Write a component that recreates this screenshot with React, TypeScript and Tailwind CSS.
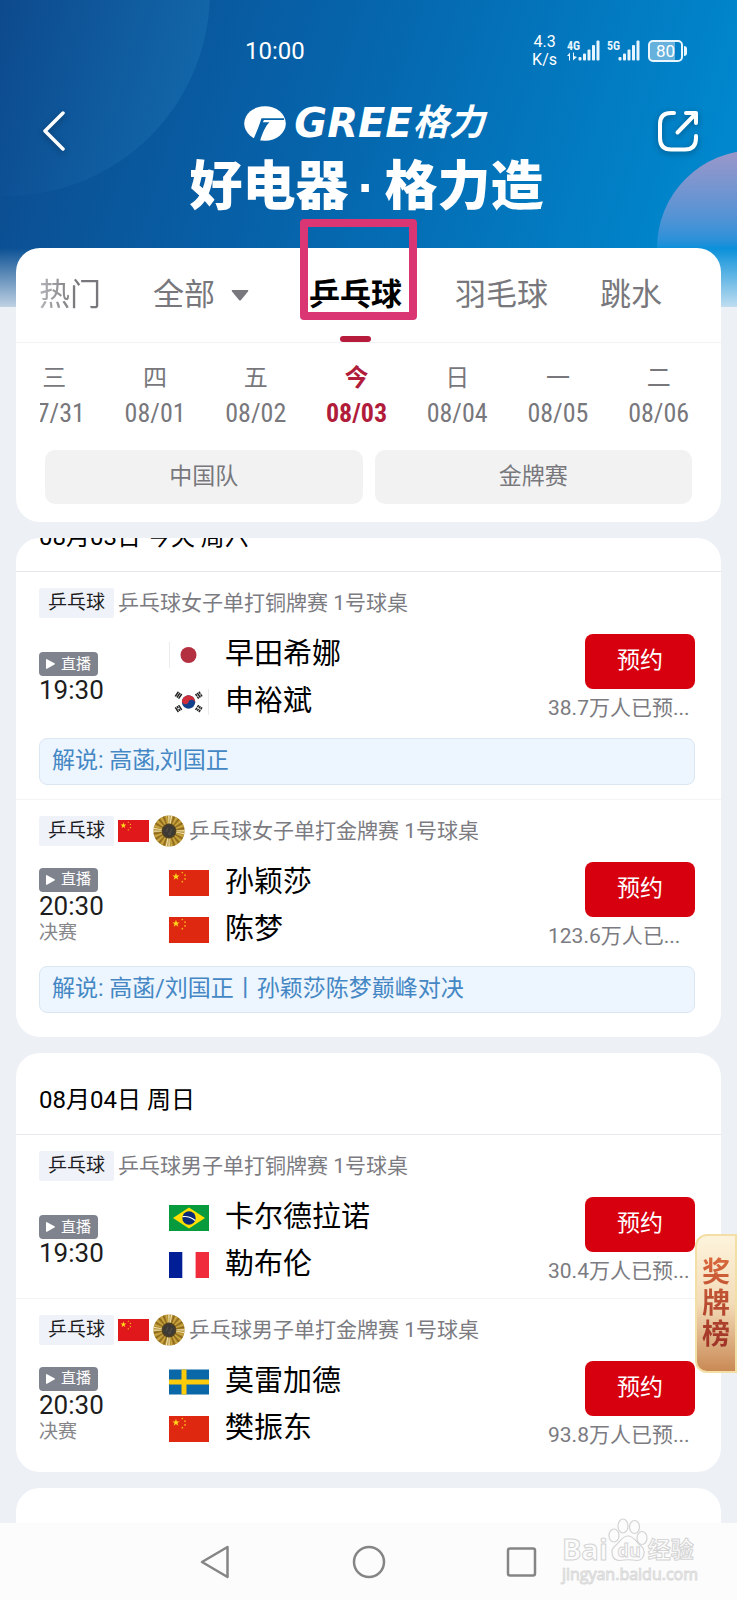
import { useState, type ReactNode } from "react";

type FlagCode = "jp" | "kr" | "cn" | "br" | "fr" | "se";

interface Player {
  flag: FlagCode;
  name: string;
}

interface Match {
  title: string;
  time: string;
  final?: boolean;
  players: Player[];
  booked: string;
  commentary?: string;
}

const STAR = "0,-10 2.3,-3.2 9.5,-3.1 3.8,1.2 5.9,8.1 0,4 -5.9,8.1 -3.8,1.2 -9.5,-3.1 -2.3,-3.2";

const bronzeWomen: Match = {
  title: "乒乓球女子单打铜牌赛 1号球桌",
  time: "19:30",
  players: [
    { flag: "jp", name: "早田希娜" },
    { flag: "kr", name: "申裕斌" },
  ],
  booked: "38.7万人已预...",
  commentary: "解说: 高菡,刘国正",
};

const goldWomen: Match = {
  title: "乒乓球女子单打金牌赛 1号球桌",
  time: "20:30",
  final: true,
  players: [
    { flag: "cn", name: "孙颖莎" },
    { flag: "cn", name: "陈梦" },
  ],
  booked: "123.6万人已...",
  commentary: "解说: 高菡/刘国正丨孙颖莎陈梦巅峰对决",
};

const bronzeMen: Match = {
  title: "乒乓球男子单打铜牌赛 1号球桌",
  time: "19:30",
  players: [
    { flag: "br", name: "卡尔德拉诺" },
    { flag: "fr", name: "勒布伦" },
  ],
  booked: "30.4万人已预...",
};

const goldMen: Match = {
  title: "乒乓球男子单打金牌赛 1号球桌",
  time: "20:30",
  final: true,
  players: [
    { flag: "se", name: "莫雷加德" },
    { flag: "cn", name: "樊振东" },
  ],
  booked: "93.8万人已预...",
};

const days = [
  { week: "三", date: "07/31" },
  { week: "四", date: "08/01" },
  { week: "五", date: "08/02" },
  { week: "今", date: "08/03" },
  { week: "日", date: "08/04" },
  { week: "一", date: "08/05" },
  { week: "二", date: "08/06" },
];

function ChinaFlag({ className, red }: { className: string; red: string }) {
  return (
    <svg viewBox="0 0 39 26" preserveAspectRatio="none" className={className} aria-label="中国">
      <rect width="39" height="26" fill={red} />
      <g fill="#ffd91a">
        <polygon points={STAR} transform="translate(6.8 6.6) scale(.38)" />
        <polygon points={STAR} transform="translate(13 2.6) scale(.12)" />
        <polygon points={STAR} transform="translate(15.6 5.2) scale(.12)" />
        <polygon points={STAR} transform="translate(15.6 9) scale(.12)" />
        <polygon points={STAR} transform="translate(13 11.7) scale(.12)" />
      </g>
    </svg>
  );
}

function Trigram({ x, y, angle, gaps }: { x: number; y: number; angle: number; gaps: number[] }) {
  return (
    <g transform={`translate(${x} ${y}) rotate(${angle})`} fill="#222">
      {[-2, 0, 2].map((dy, i) => (
        <g key={dy}>
          <rect x="-2.8" y={dy - 0.75} width="5.6" height="1.5" />
          {gaps.includes(i) && <rect x="-.4" y={dy - 0.8} width=".8" height="1.6" fill="#fff" />}
        </g>
      ))}
    </g>
  );
}

function Flag({ code }: { code: FlagCode }) {
  const box = "h-[26px] w-10 shrink-0";
  switch (code) {
    case "cn":
      return <ChinaFlag className={box} red="#de2910" />;
    case "jp":
      return (
        <svg viewBox="0 0 40 26" className={box} aria-label="日本">
          <rect width="40" height="26" fill="#fff" />
          <path d="M.5 0V26" stroke="#ececec" />
          <circle cx="19.5" cy="13" r="8" fill="#b23040" />
        </svg>
      );
    case "kr":
      return (
        <svg viewBox="0 0 40 26" className={box} aria-label="韩国">
          <rect width="40" height="26" fill="#fff" />
          <path d="M39.5 0V26" stroke="#ececec" />
          <g transform="rotate(20 19.5 13)">
            <circle cx="19.5" cy="13" r="6.7" fill="#123f8c" />
            <path d="M12.8 13a6.7 6.7 0 0 1 13.4 0a3.35 3.35 0 0 0-6.7 0a3.35 3.35 0 0 1-6.7 0Z" fill="#cd2e3a" />
          </g>
          <Trigram x={9.5} y={6.2} angle={-56} gaps={[]} />
          <Trigram x={29.8} y={6.2} angle={56} gaps={[0, 2]} />
          <Trigram x={9.5} y={19.6} angle={56} gaps={[1]} />
          <Trigram x={29.8} y={19.6} angle={-56} gaps={[0, 1, 2]} />
        </svg>
      );
    case "br":
      return (
        <svg viewBox="0 0 40 26" className={box} aria-label="巴西">
          <rect width="40" height="26" fill="#089b3e" />
          <path d="M20 2.5 36 13 20 23.5 4 13Z" fill="#fedf00" />
          <circle cx="20" cy="13" r="6.7" fill="#0b2a78" />
          <path d="M13.6 11.6q6.8-.9 12.6 3.9" stroke="#fff" strokeWidth="1.1" fill="none" />
        </svg>
      );
    case "fr":
      return (
        <svg viewBox="0 0 40 26" className={box} aria-label="法国">
          <rect width="40" height="26" fill="#fff" />
          <rect width="13.3" height="26" fill="#001f96" />
          <rect x="26.6" width="13.4" height="26" fill="#ef2b3c" />
        </svg>
      );
    default:
      return (
        <svg viewBox="0 0 40 26" className={box} aria-label="瑞典">
          <rect y=".5" width="40" height="25" fill="#0a67a8" />
          <path d="M0 13H40M15 .5V25.5" stroke="#fecb0a" strokeWidth="5" />
        </svg>
      );
  }
}

function GoldMedal() {
  const rays = Array.from({ length: 36 }, (_, i) => i);
  return (
    <svg viewBox="-16 -16 32 32" className="size-8 shrink-0" aria-label="金牌">
      <circle r="15.6" fill="#b08a2c" />
      {rays.map((i) => (
        <path
          key={i}
          d="M-.4-6 L-.8-15.4 H.6 L.3-6Z"
          transform={`rotate(${i * 10})`}
          fill={i % 9 < 2 ? "#f3e6b4" : i % 2 ? "#cdab48" : "#8a671c"}
        />
      ))}
      <circle r="7.4" fill="#4f4022" />
      <path d="M0-6.500 5.500-3.200V3.200L0 6.500-5.500 3.200V-3.200Z" fill="#3d3a36" />
      <path d="M-3 1-1-3M1 2 3-2M-1 3H2" stroke="#5a5347" strokeWidth="1" />
    </svg>
  );
}

function SignalBars({ label, arrows }: { label: string; arrows?: boolean }) {
  return (
    <svg viewBox="0 0 34 24" className="h-6 w-[34px]" fill="#e9f6ff">
      <text x="0" y="11" fontFamily="'Liberation Sans Narrow', 'Roboto Condensed', Roboto, sans-serif" fontSize="12" fontWeight="700">
        {label}
      </text>
      {arrows && <path d="M0 17 3 13.500V21.500H2V17ZM6 13.500V21.500L10 18 7 17V13.500Z" />}
      <rect x="11.500" y="18" width="3" height="3.500" rx="1" />
      <rect x="16" y="14.500" width="3" height="7" rx="1" />
      <rect x="20.500" y="10.500" width="3" height="11" rx="1" />
      <rect x="25" y="6" width="3" height="15.500" rx="1" />
      <rect x="29.500" y="1.500" width="3" height="20" rx="1" />
    </svg>
  );
}

function Header() {
  return (
    <header className="relative h-[248px] text-white">
      <div className="flex h-[102px] items-center justify-between pr-[50px] pl-[245px]">
        <time className="font-[Roboto,sans-serif] text-[24px] leading-8">10:00</time>
        <div className="flex items-center">
          <p className="mr-[10px] text-center font-[Roboto,sans-serif] text-[16px] leading-[18px]">
            4.3
            <br />
            K/s
          </p>
          <div className="mr-[7px] flex gap-[6px]">
            <SignalBars label="4G" arrows />
            <SignalBars label="5G" />
          </div>
          <div className="flex h-[22px] w-[35px] items-center justify-center rounded-[5px] border-2 border-[#e9f6ff] bg-linear-to-r from-white/40 from-80% to-transparent to-80% font-[Roboto,sans-serif] text-[17px] leading-none">
            80
          </div>
          <div className="ml-px h-[10px] w-[3px] rounded-r bg-[#e9f6ff]" />
        </div>
      </div>

      <div className="flex items-start justify-between pr-[38px] pl-[36px]">
        <button type="button" aria-label="返回" className="mt-2 drop-shadow-[0_2px_3px_rgba(0,0,0,0.3)]">
          <svg viewBox="0 0 36 42" className="h-[42px] w-9" fill="none" stroke="#fff" strokeWidth="3.500" strokeLinecap="round" strokeLinejoin="round">
            <path d="M27 3 9 21 27 39" />
          </svg>
        </button>

        <div className="flex flex-col items-center pl-1">
          <div className="flex h-[42px] items-center pr-1">
            <svg viewBox="0 0 42 35" className="mr-2 h-[35px] w-[42px] shrink-0" aria-label="GREE">
              <ellipse cx="21" cy="17.500" rx="20.800" ry="17.200" fill="#fff" />
              <path
                d="M17.500 12.300H40V13.900H20L18.800 16.300H25.500C21.500 20 18.500 27 16 35H8.500C12 28 15 20 17.500 12.300Z"
                fill="#0763a9"
              />
            </svg>
            <span className="font-['DejaVu_Sans',sans-serif] text-[40px] leading-none font-bold italic">GREE</span>
            <span className="text-[36px] leading-none font-bold italic">格力</span>
          </div>
          <h1 className="flex h-[86px] items-center text-[53px] leading-none font-black">
            好电器
            <span className="w-9 text-center font-['Liberation_Sans',sans-serif]">·</span>
            格力造
          </h1>
        </div>

        <button type="button" aria-label="分享" className="mt-2 drop-shadow-[0_2px_3px_rgba(0,0,0,0.3)]">
          <svg viewBox="0 0 42 42" className="size-[42px]" fill="none" stroke="#fff" strokeWidth="4" strokeLinecap="round" strokeLinejoin="round">
            <path d="M17 3H14Q3 3 3 14V28Q3 39.500 14 39.500H28Q39 39.500 39 28V26" />
            <path d="M20.500 22.500 38 4.500M29 3H39V13" />
          </svg>
        </button>
      </div>
    </header>
  );
}

function SportTabs({ active, onSelect }: { active: string; onSelect: (name: string) => void }) {
  const tab = "h-[94px] shrink-0 text-[31px] text-[#77777c]";
  return (
    <nav className="relative flex items-center overflow-x-clip border-b border-[#f1f3f5] pl-[23px]">
      <button
        type="button"
        className="h-[94px] shrink-0 bg-linear-to-r from-[#b4b4b8] to-[#77777c] to-60% bg-clip-text text-[31px] text-transparent"
        onClick={() => onSelect("热门")}
      >
        热门
      </button>
      <button type="button" className={`${tab} ml-[52px] flex items-center gap-4`} onClick={() => onSelect("全部")}>
        全部
        <svg viewBox="0 0 18 11" className="h-[11px] w-[18px]" fill="#77777c">
          <path d="M1.500 0H16.500Q18 0 17 1.500L10 10Q9 11 8 10L1 1.500Q0 0 1.500 0Z" />
        </svg>
      </button>
      <button
        type="button"
        aria-current={active === "乒乓球"}
        className="relative ml-[60px] h-[94px] shrink-0 text-[31px] font-bold text-black"
        onClick={() => onSelect("乒乓球")}
      >
        乒乓球
        <span className="absolute inset-x-0 bottom-0 mx-auto h-[6px] w-[31px] rounded-full bg-[#b81c3c]" />
        <span className="absolute -top-[29px] -left-[9px] h-[101px] w-[117px] rounded-[4px] border-8 border-[#da3673]" />
      </button>
      <button type="button" className={`${tab} ml-[53px]`} onClick={() => onSelect("羽毛球")}>
        羽毛球
      </button>
      <button type="button" className={`${tab} ml-[52px]`} onClick={() => onSelect("跳水")}>
        跳水
      </button>
    </nav>
  );
}

function LiveBadge() {
  return (
    <span className="flex h-6 w-[59px] items-center justify-center gap-[6px] rounded bg-[#7f838d] text-[15px] text-white">
      <svg viewBox="0 0 9 10" className="h-[10px] w-[9px]" fill="#fff">
        <path d="M0 .8Q0-.3 1 .3L8.500 4.300Q9.300 5 8.500 5.600L1 9.700Q0 10.200 0 9.200Z" />
      </svg>
      直播
    </span>
  );
}

function MatchRow({ match }: { match: Match }) {
  const [booked, setBooked] = useState(false);
  return (
    <article className={match.commentary ? "pt-4 pr-[26px] pb-3.5 pl-[23px]" : "pt-4 pr-[26px] pb-[10px] pl-[23px]"}>
      <div className="flex h-[30px] items-center">
        <span className="flex h-[30px] w-[75px] shrink-0 items-center justify-center rounded-[2px] bg-[#eff2f8] text-[19px] text-[#1c1c22]">乒乓球</span>
        {match.final && (
          <>
            <ChinaFlag className="mr-1 ml-1 h-[22px] w-[31px] shrink-0" red="#e0181c" />
            <GoldMedal />
          </>
        )}
        <h3 className="ml-1 truncate text-[21px] leading-[30px] text-[#7b7b81]">{match.title}</h3>
      </div>

      <div className="mt-[13px] flex h-[94px] items-center">
        <div className="flex w-[130px] shrink-0 flex-col items-start">
          <LiveBadge />
          <time className="text-[26px] leading-[28px] text-[#1d1d20]">{match.time}</time>
          {match.final && <span className="text-[19px] leading-[25px] text-[#85858a]">决赛</span>}
        </div>
        <ul className="grow">
          {match.players.map((player) => (
            <li key={player.name} className="flex h-[47px] items-center gap-4 text-[29px] leading-none text-black">
              <Flag code={player.flag} />
              {player.name}
            </li>
          ))}
        </ul>
        <div className="flex w-[147px] shrink-0 flex-col items-end">
          <button
            type="button"
            aria-pressed={booked}
            onClick={() => setBooked(!booked)}
            className="h-[55px] w-[110px] rounded-lg bg-[#d7000f] text-[23px] text-white"
          >
            预约
          </button>
          <p className="mt-[5px] w-full text-[21px] leading-[29px] whitespace-nowrap text-[#7b7b81]">{match.booked}</p>
        </div>
      </div>

      {match.commentary && (
        <p className="mt-[13px] flex h-[47px] items-center rounded-lg border border-[#dbe6f1] bg-[#edf5fe] px-3 text-[23px] text-[#4487c4]">
          {match.commentary}
        </p>
      )}
    </article>
  );
}

function DayCard({ title, className, children }: { title: string; className?: string; children: ReactNode }) {
  return (
    <section className="overflow-hidden rounded-3xl bg-white">
      <div className={className}>
        <h2 className="flex h-[82px] items-center border-b border-[#e6e8eb] px-[23px] pt-3 text-[24px] text-black">{title}</h2>
        <div className="divide-y divide-[#f3f4f6] pb-[10px]">{children}</div>
      </div>
    </section>
  );
}

function Watermark() {
  return (
    <div className="absolute right-[39px] bottom-4 text-[#fcfcfc]">
      <div className="flex items-end font-['Open_Sans','Noto_Sans_CJK_SC',sans-serif] leading-none font-bold">
        <span className="text-[29px] leading-[26px] [-webkit-text-stroke:1px_#d4d4d4]">Bai</span>
        <svg viewBox="0 0 40 44" className="h-11 w-10" fill="#fcfcfc" stroke="#d4d4d4" strokeWidth="1.200">
          <ellipse cx="6" cy="17.500" rx="5" ry="6.500" />
          <ellipse cx="15" cy="8" rx="5" ry="7" />
          <ellipse cx="26.500" cy="9" rx="5" ry="6.500" />
          <ellipse cx="34" cy="20" rx="5" ry="6.500" />
          <path d="M20 18C26 18 28 24 33 28C38 32 37 42 29 42.500Q20 41 12 42.500C3 42.500 2 32 7 28C12 24 14 18 20 18Z" />
          <text x="9.500" y="39" fontSize="18" fontWeight="700" strokeWidth="1">
            du
          </text>
        </svg>
        <span className="text-[23px] leading-[26px] [-webkit-text-stroke:1px_#d4d4d4]">经验</span>
      </div>
      <div className="mt-0.5 font-['Open_Sans',sans-serif] text-[16px] leading-[20px] [-webkit-text-stroke:1px_#dadada]">jingyan.baidu.com</div>
    </div>
  );
}

export default function App() {
  const [active, setActive] = useState("乒乓球");
  return (
    <div className="relative flex min-h-screen flex-col overflow-hidden bg-[#edf1f6] font-[Roboto,'Noto_Sans_CJK_SC',sans-serif]" lang="zh-CN">
      <div className="absolute inset-x-0 top-0 h-[307px] overflow-hidden bg-[linear-gradient(108deg,#0d4a8d_0%,#0663aa_42%,#0087cd_92%)]">
        <div className="absolute -top-[212px] -left-[198px] size-[408px] rounded-full bg-[linear-gradient(100deg,rgba(0,80,160,0)_50%,rgba(60,160,210,0.2)_100%)]" />
        <div className="absolute top-[150px] -right-[116px] size-[196px] rounded-full bg-linear-to-b from-[#9a97c9] to-[#0a90da] to-50%" />
        <div className="absolute inset-x-0 bottom-0 h-[59px] bg-linear-to-b from-[#edf1f6]/0 to-[#edf1f6]/80" />
      </div>

      <Header />

      <main className="relative flex grow flex-col gap-4 px-4">
        <section className="rounded-3xl bg-white">
          <SportTabs active={active} onSelect={setActive} />
          <div className="mx-6 overflow-hidden">
            <ol className="-mr-3 -ml-9 grid grid-cols-7 pt-[19px] text-center">
              {days.map((day) => (
                <li key={day.date} className={day.week === "今" ? "font-bold text-[#b01c3a]" : "text-[#77777c]"}>
                  <div className="text-[24px] leading-[33px]">{day.week}</div>
                  <div className="font-['Liberation_Sans_Narrow','Roboto_Condensed',Roboto,sans-serif] text-[26px] leading-[36px]">{day.date}</div>
                </li>
              ))}
            </ol>
          </div>
          <div className="mt-[19px] grid grid-cols-2 gap-3 px-[29px] pb-[18px]">
            <button type="button" className="h-[54px] rounded-[10px] bg-[#f2f2f3] text-[23px] text-[#77777c]">
              中国队
            </button>
            <button type="button" className="h-[54px] rounded-[10px] bg-[#f2f2f3] text-[23px] text-[#77777c]">
              金牌赛
            </button>
          </div>
        </section>

        <DayCard title="08月03日 今天 周六" className="-mt-12">
          <MatchRow match={bronzeWomen} />
          <MatchRow match={goldWomen} />
        </DayCard>

        <DayCard title="08月04日 周日">
          <MatchRow match={bronzeMen} />
          <MatchRow match={goldMen} />
        </DayCard>

        <section className="min-h-[33px] grow rounded-t-3xl bg-white" />
      </main>

      <a
        href="#medals"
        className="absolute top-[1234px] right-0 flex h-[139px] w-[42px] flex-col items-center justify-center rounded-l-xl border-2 border-[#f3dfa6] bg-linear-to-b from-[#fdf3dc] via-[#f3dcb8] to-[#c98a55]"
      >
        <span className="w-7 bg-linear-to-b from-[#d9683c] to-[#9c3026] bg-clip-text text-[28px] leading-[31px] font-bold text-transparent">奖牌榜</span>
      </a>

      <footer className="relative flex h-[77px] items-center justify-center gap-[120px] bg-[#fcfcfc]">
        <button type="button" aria-label="返回键">
          <svg viewBox="0 0 32 34" className="h-[34px] w-8" fill="none" stroke="#858585" strokeWidth="2.500" strokeLinejoin="round">
            <path d="M27.500 2V32L2 17Z" />
          </svg>
        </button>
        <button type="button" aria-label="主屏幕">
          <svg viewBox="0 0 34 34" className="size-[34px]" fill="none" stroke="#858585" strokeWidth="2.500">
            <circle cx="17" cy="17" r="15" />
          </svg>
        </button>
        <button type="button" aria-label="最近任务">
          <svg viewBox="0 0 32 34" className="h-[34px] w-8" fill="none" stroke="#858585" strokeWidth="2.500">
            <rect x="2" y="3.500" width="27" height="27" rx="2" />
          </svg>
        </button>
        <Watermark />
      </footer>
    </div>
  );
}
